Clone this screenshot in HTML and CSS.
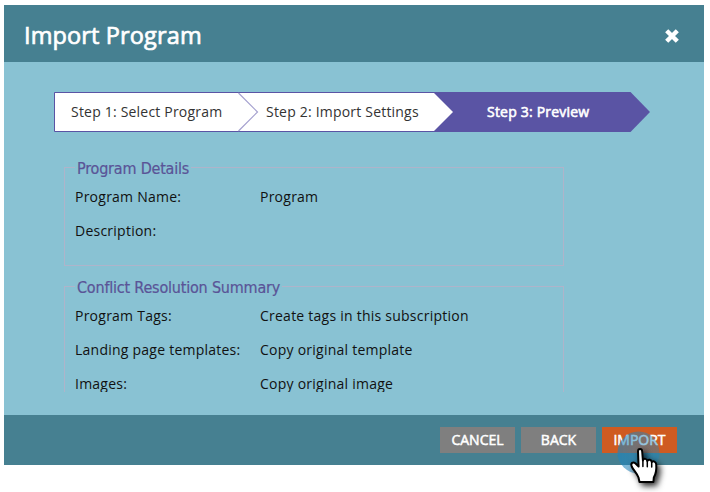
FILE: index.html
```html
<!DOCTYPE html>
<html lang="en">
<head>
<meta charset="utf-8">
<title>Import Program</title>
<link rel="stylesheet" href="styles.css">
</head>
<body>
<div class="dialog">
  <header class="dialog-header">
    <h1>Import Program</h1>
    <svg class="close" width="16" height="16" viewBox="0 0 16 16"><path d="M2.700 2.700 13.300 13.300M13.300 2.700 2.700 13.300"/></svg>
  </header>
  <main class="dialog-body">
    <div class="steps">
      <svg class="steps-shape" width="596" height="40" viewBox="0 0 596 40">
        <path class="current-step" d="M370 0H576.500L596 20 576.500 40H370Z"/>
        <path class="track" d="M.5 39.500V.5H380M.5 39.500H380"/>
        <path class="track-fill" d="M1 1H380L399 20 380 39H1Z"/>
        <path class="divider" d="M184.500 1 203.500 20 184.500 39"/>
      </svg>
      <span class="step step-one">Step 1: Select Program</span>
      <span class="step step-two">Step 2: Import Settings</span>
      <span class="step step-three">Step 3: Preview</span>
    </div>
    <div class="summary">
      <fieldset class="details">
        <legend>Program Details</legend>
        <dl>
          <dt>Program Name:</dt><dd>Program</dd>
          <dt>Description:</dt><dd></dd>
        </dl>
      </fieldset>
      <fieldset class="conflicts">
        <legend>Conflict Resolution Summary</legend>
        <dl>
          <dt>Program Tags:</dt><dd>Create tags in this subscription</dd>
          <dt>Landing page templates:</dt><dd>Copy original template</dd>
          <dt>Images:</dt><dd>Copy original image</dd>
        </dl>
      </fieldset>
    </div>
  </main>
  <footer class="dialog-footer">
    <button>CANCEL</button>
    <button>BACK</button>
    <button class="primary">IMPORT</button>
  </footer>
</div>
<svg class="pointer" width="70" height="72" viewBox="610 420 70 72">
  <defs>
    <linearGradient id="halo" x1="0" y1="0" x2="1" y2="0">
      <stop offset="0" stop-color="#1e84bd" stop-opacity=".62"/>
      <stop offset=".5" stop-color="#1e84bd" stop-opacity=".5"/>
      <stop offset="1" stop-color="#1e84bd" stop-opacity=".4"/>
    </linearGradient>
    <filter id="shadow" x="-50%" y="-50%" width="200%" height="200%">
      <feDropShadow dx="3" dy="3" stdDeviation="3" flood-color="#000" flood-opacity=".85"/>
    </filter>
    <filter id="soften"><feGaussianBlur stdDeviation=".6"/></filter>
  </defs>
  <circle cx="638.500" cy="452.500" r="21" fill="url(#halo)" filter="url(#soften)"/>
  <path class="hand" filter="url(#shadow)" d="M639.500 482 L638.500 477.500 C636.500 472.500 633.500 470.500 631.700 466.500 C630.300 463 633 461.500 635.300 463.200 L638.600 466.500 L638 451.500 C638 448.300 642 448.300 642.200 451.500 L642.900 460.500 C643.500 458 647 458.500 647.300 461 C648.200 458.800 651.500 459.500 651.700 462 C653.200 460.500 656 461.500 656.200 464.300 C656.700 470 656 474 653.800 477.500 L653.400 482 Z"/>
  <path class="fingers" d="M642.900 460V466.500M647.300 461V466.800M651.700 462V467"/>
</svg>
</body>
</html>
```
FILE: styles.css
```css
* { box-sizing: border-box; }
body {
  margin: 0;
  width: 710px;
  height: 492px;
  overflow: hidden;
  padding: 5px 6px 0 4px;
  background: #fff;
  font-family: "Open Sans", sans-serif;
  font-size: 14px;
}
.dialog {
  display: flex;
  flex-direction: column;
  height: 460px;
  background: #89c2d3;
}
.dialog-header {
  display: flex;
  align-items: center;
  justify-content: space-between;
  height: 57px;
  padding: 0 24px 0 20px;
  background: #468091;
}
h1 {
  margin: 0 0 -3px;
  color: #fff;
  font-size: 23.5px;
  font-weight: 400;
  line-height: 32px;
  letter-spacing: .13px;
  -webkit-text-stroke: .7px #fff;
}
.close { margin-top: 5px; fill: none; stroke: #fff; stroke-width: 4.4; }
.dialog-body { flex: 1; min-height: 0; padding: 30px 50px 0; }
.steps { position: relative; display: flex; height: 40px; width: 596px; line-height: 40px; }
.steps-shape { position: absolute; inset: 0; }
.track { fill: none; stroke: #5a54a4; }
.track-fill { fill: #fff; }
.divider { fill: none; stroke: #a5a1cf; stroke-width: 1.2; }
.current-step { fill: #5a54a4; }
.step { position: relative; color: #333; letter-spacing: .2px; white-space: nowrap; }
.step-one { width: 195px; margin-left: 17px; }
.step-two { width: 221px; }
.step-three { color: #fff; -webkit-text-stroke: .6px #fff; }
.summary { height: 260px; padding: 25px 10px 0; overflow: hidden; }
fieldset {
  display: block;
  width: 500px;
  margin: 0;
  padding: 0 10px;
  border: 1px solid #aeb4ca;
}
.details { height: 109px; margin-bottom: 10px; }
.conflicts { height: 160px; }
legend {
  height: 21px;
  padding: 0 2px;
  color: #5a5497;
  font-family: "DejaVu Sans Condensed", "DejaVu Sans", sans-serif;
  font-stretch: condensed;
  font-size: 16px;
  line-height: 23px;
  letter-spacing: -.2px;
  -webkit-text-stroke: .2px #5a5497;
}
dl {
  display: grid;
  grid-template-columns: 185px 1fr;
  grid-auto-rows: 34px;
  margin: 2px 0 0;
  line-height: 34px;
  color: #111;
  letter-spacing: .24px;
}
dt, dd { margin: 0; white-space: nowrap; }
.dialog-footer {
  display: flex;
  justify-content: flex-end;
  gap: 6px;
  height: 50px;
  padding: 12px 27px 0 0;
  background: #468091;
}
button {
  width: 75px;
  height: 26px;
  padding: 0;
  border: 0;
  background: #7f7f7f;
  color: #fff;
  font: 14px/26px "Open Sans", sans-serif;
  -webkit-text-stroke: .5px #fff;
}
.primary { background: #cf5b21; }
.pointer { position: absolute; left: 610px; top: 420px; }
.hand { fill: #fff; stroke: #000; stroke-width: 2; stroke-linejoin: round; }
.fingers { fill: none; stroke: #000; stroke-width: 1.5; stroke-linecap: round; }
```
